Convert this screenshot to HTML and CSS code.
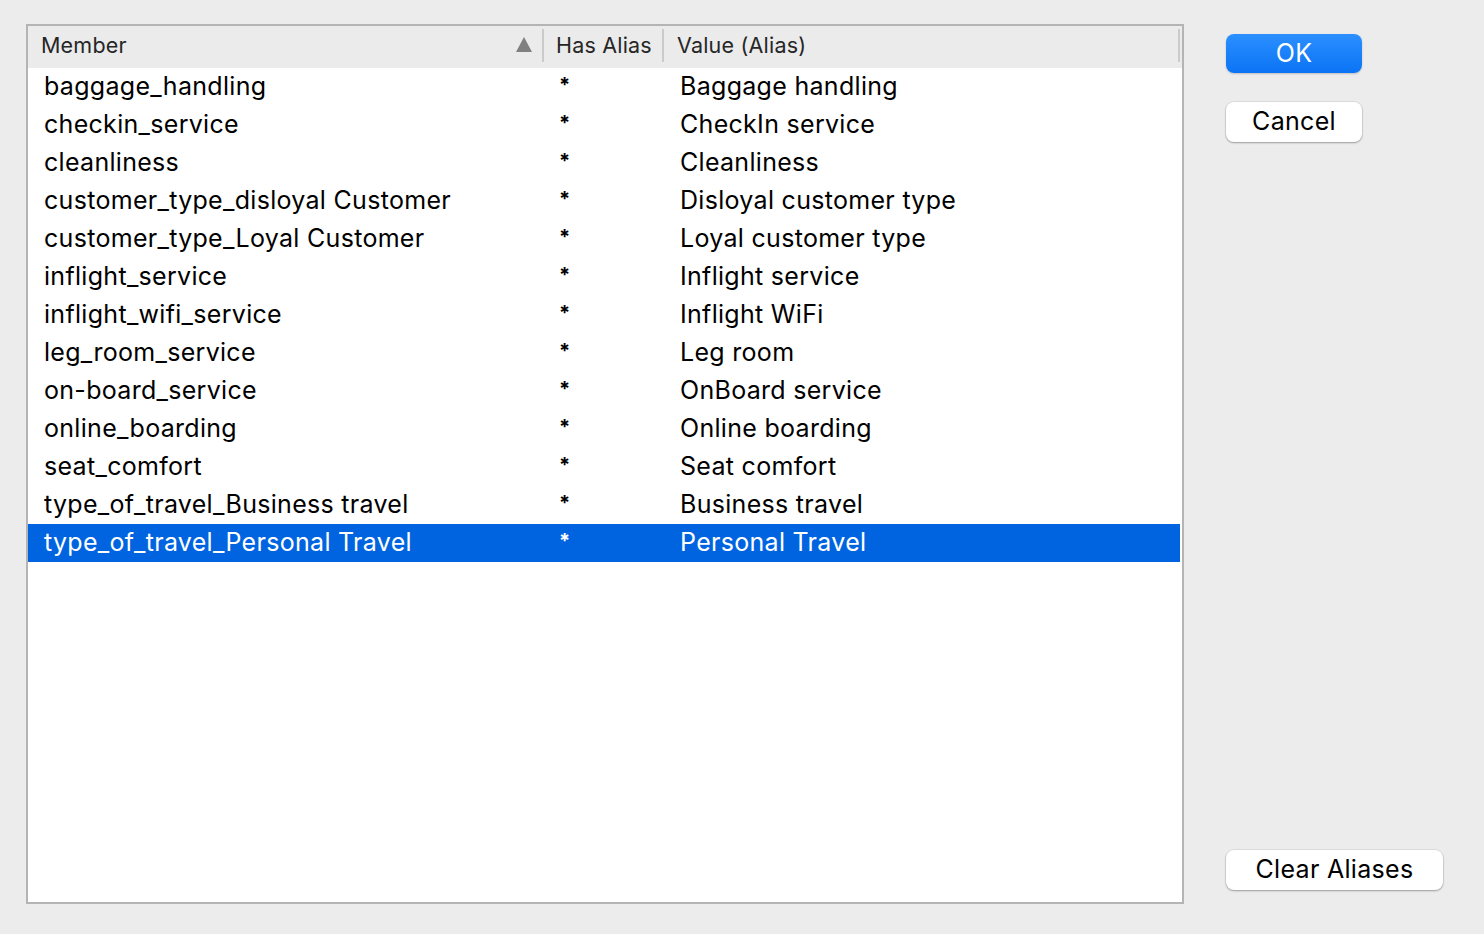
FILE: index.html
```html
<!DOCTYPE html>
<html lang="en">
<head>
<meta charset="utf-8">
<title>Aliases</title>
<link rel="stylesheet" href="styles.css">
</head>
<body>
<div class="dialog">
  <div class="table">
    <div class="thead">
      <div class="th th-member"><span>Member</span><span class="sort"></span></div>
      <div class="th th-has"><span>Has Alias</span></div>
      <div class="th th-value"><span>Value (Alias)</span></div>
    </div>
    <div class="tbody">
      <div class="row"><span class="c-member">baggage_handling</span><span class="c-has">*</span><span class="c-value">Baggage handling</span></div>
      <div class="row"><span class="c-member">checkin_service</span><span class="c-has">*</span><span class="c-value">CheckIn service</span></div>
      <div class="row"><span class="c-member">cleanliness</span><span class="c-has">*</span><span class="c-value">Cleanliness</span></div>
      <div class="row"><span class="c-member">customer_type_disloyal Customer</span><span class="c-has">*</span><span class="c-value">Disloyal customer type</span></div>
      <div class="row"><span class="c-member">customer_type_Loyal Customer</span><span class="c-has">*</span><span class="c-value">Loyal customer type</span></div>
      <div class="row"><span class="c-member">inflight_service</span><span class="c-has">*</span><span class="c-value">Inflight service</span></div>
      <div class="row"><span class="c-member">inflight_wifi_service</span><span class="c-has">*</span><span class="c-value">Inflight WiFi</span></div>
      <div class="row"><span class="c-member">leg_room_service</span><span class="c-has">*</span><span class="c-value">Leg room</span></div>
      <div class="row"><span class="c-member">on-board_service</span><span class="c-has">*</span><span class="c-value">OnBoard service</span></div>
      <div class="row"><span class="c-member">online_boarding</span><span class="c-has">*</span><span class="c-value">Online boarding</span></div>
      <div class="row"><span class="c-member">seat_comfort</span><span class="c-has">*</span><span class="c-value">Seat comfort</span></div>
      <div class="row"><span class="c-member">type_of_travel_Business travel</span><span class="c-has">*</span><span class="c-value">Business travel</span></div>
      <div class="row selected"><span class="c-member">type_of_travel_Personal Travel</span><span class="c-has">*</span><span class="c-value">Personal Travel</span></div>
    </div>
  </div>
  <div class="side">
    <button class="btn btn-ok">OK</button>
    <button class="btn btn-cancel">Cancel</button>
    <button class="btn btn-clear">Clear Aliases</button>
  </div>
</div>
</body>
</html>
```

FILE: styles.css
```css
html, body {
  margin: 0;
  padding: 0;
  background: #ececec;
  font-family: Inter, "Liberation Sans", sans-serif;
  color: #000;
}

.dialog {
  display: flex;
  align-items: flex-start;
  gap: 42px;
  padding: 24px 0 0 26px;
}

.table {
  width: 1154px;
  height: 876px;
  border: 2px solid #b4b4b4;
  background: #fff;
  display: flex;
  flex-direction: column;
}

.thead {
  display: grid;
  grid-template-columns: 516px 120px 516px;
  height: 42px;
  box-sizing: border-box;
  padding: 3px 0 6px;
  background: #ebebeb;
}

.th {
  display: flex;
  align-items: center;
  height: 33px;
  box-sizing: border-box;
  border-right: 2px solid #cbcbcb;
  padding-left: 12px;
  padding-bottom: 2px;
  font-size: 21.5px;
  color: #262626;
  letter-spacing: 0.2px;
}

.th-member {
  padding-left: 13px;
  justify-content: space-between;
  padding-right: 10px;
}

.th-value {
  padding-left: 13px;
}

.sort {
  width: 0;
  height: 0;
  border-left: 8px solid transparent;
  border-right: 8px solid transparent;
  border-bottom: 15px solid #808080;
}

.tbody {
  width: 1152px;
}

.row {
  display: grid;
  grid-template-columns: 516px 120px 516px;
  height: 38px;
  box-sizing: border-box;
  padding-bottom: 3px;
  align-items: center;
  font-size: 25px;
  letter-spacing: 0.3px;
}

.row span {
  white-space: nowrap;
}

.c-member {
  padding-left: 16px;
}

.c-has {
  padding-left: 15px;
  font-weight: 700;
  font-size: 20px;
  align-self: start;
  padding-top: 5px;
}

.c-value {
  padding-left: 16px;
}

.row.selected {
  background: #0064e1;
  color: #fff;
}

.side {
  display: flex;
  flex-direction: column;
  align-items: flex-start;
  height: 856px;
  padding-top: 10px;
}

.btn {
  font-family: Inter, "Liberation Sans", sans-serif;
  font-size: 25px;
  letter-spacing: 0.3px;
  border: none;
  border-radius: 8px;
  padding: 0 0 2px;
  width: 136px;
  height: 39px;
  background: #fff;
  color: #000;
  box-shadow: 0 0 0 1px rgba(0,0,0,0.06), 0 1px 2px rgba(0,0,0,0.3);
}

.btn-ok {
  background: linear-gradient(#2b8fff, #0b74f5);
  color: #fff;
  box-shadow: 0 1px 2px rgba(0,0,0,0.2);
}

.btn-cancel {
  margin-top: 29px;
  height: 40px;
}

.btn-clear {
  margin-top: auto;
  width: 217px;
  height: 40px;
}
```
